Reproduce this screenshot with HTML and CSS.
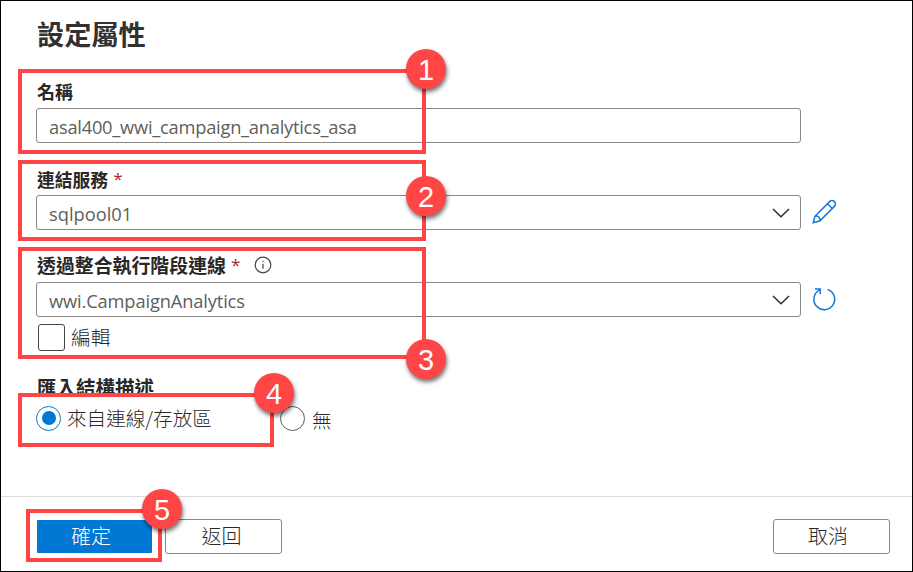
FILE: index.html
```html
<!DOCTYPE html>
<html lang="zh-Hant">
<head>
<meta charset="utf-8">
<title>設定屬性</title>
<link rel="stylesheet" href="styles.css">
</head>
<body>
<div class="panel">
  <main class="form">
    <h1 class="title">設定屬性</h1>

    <div class="field field-name">
      <label class="label label-name">名稱</label>
      <div class="row"><div class="input"><span class="t-name">asal400_wwi_campaign_analytics_asa</span></div></div>
    </div>

    <div class="field field-service">
      <label class="label label-service">連結服務<span class="req">*</span></label>
      <div class="row">
        <div class="input"><span class="t-pool">sqlpool01</span>
          <svg class="chevron" width="18" height="10" viewBox="0 0 18 10"><path d="M1 1l8 7.7L17 1"/></svg>
        </div>
        <svg class="action" width="26" height="26" viewBox="0 0 26 26"><path d="M2.2 23.7l1.7-6.4L18.6 2.6a3.35 3.35 0 0 1 4.8 4.8L8.7 22z M3.9 17.3a3.6 3.6 0 0 1 4.8 4.7 M16.5 4.7l4.8 4.8"/></svg>
      </div>
    </div>

    <div class="field field-runtime">
      <label class="label label-runtime">透過整合執行階段連線<span class="req">*</span>
        <svg class="info" width="18" height="18" viewBox="0 0 18 18"><circle cx="9" cy="9" r="7.8"/><path d="M9 7.7v5M9 4.8v1.3"/></svg>
      </label>
      <div class="row">
        <div class="input"><span class="t-wwi">wwi.CampaignAnalytics</span>
          <svg class="chevron" width="18" height="10" viewBox="0 0 18 10"><path d="M1 1l8 7.7L17 1"/></svg>
        </div>
        <svg class="action" width="26" height="26" viewBox="0 0 26 26"><path d="M16.5 3.4A10.4 10.4 0 1 1 8.4 4.1M4 3.1h5.2v5.2"/></svg>
      </div>
      <div class="check"><span class="checkbox"></span><span class="check-text">編輯</span></div>
    </div>

    <div class="field field-schema">
      <div class="label label-schema">匯入結構描述</div>
      <div class="radios">
        <span class="radio radio-on"></span><span class="radio-source">來自連線/存放區</span>
        <span class="radio"></span><span class="radio-none">無</span>
      </div>
    </div>
  </main>

  <footer class="footer">
    <button class="btn primary">確定</button>
    <button class="btn back">返回</button>
    <button class="btn cancel">取消</button>
  </footer>

  <div class="callout c1"><b class="badge">1</b></div>
  <div class="callout c2"><b class="badge">2</b></div>
  <div class="callout c3"><b class="badge low">3</b></div>
  <div class="callout c4"><b class="badge">4</b></div>
  <div class="callout c5"><b class="badge">5</b></div>
</div>
</body>
</html>
```
FILE: styles.css
```css
* { box-sizing: border-box; }
body { margin: 0; }
.panel {
  position: relative;
  display: flex;
  flex-direction: column;
  width: 913px;
  height: 572px;
  border: 1px solid #000;
  background: #fff;
  color: #292827;
  font-family: "Open Sans", "Noto Sans CJK TC", sans-serif;
  overflow: hidden;
}
.form { height: 495px; padding: 16px 0 0 36px; }
.title { margin: 0; height: 32px; font: 700 27.2px/32px "Noto Sans CJK TC", sans-serif; color: #323130; }
.field { margin-left: -1px; }
.field-name { margin-top: 31px; }
.field-service { margin-top: 24px; }
.field-runtime { margin-top: 24px; }
.field-schema { margin-top: 24px; }
.label {
  display: flex;
  align-items: center;
  height: 24px;
  margin-bottom: 4px;
  padding: 0 0 2px 1px;
  font-family: "Noto Sans CJK TC", sans-serif;
  font-weight: 700;
  font-size: 18px;
  white-space: nowrap;
}
.label-service { padding-bottom: 1px; font-size: 17.8px; }
.label-runtime { padding-bottom: 3px; font-size: 18.9px; }
.label-schema { font-size: 19.5px; }
.req { margin-left: 5px; font: 400 17px/20px "Open Sans", sans-serif; color: #a4262c; }
.info { margin-left: 14px; fill: none; stroke: #484644; stroke-width: 1.2; }
.row { display: flex; align-items: center; height: 35px; }
.input {
  display: flex;
  align-items: center;
  justify-content: space-between;
  width: 765px;
  height: 35px;
  padding: 1px 10px 0 12px;
  border: 1.4px solid #8a8886;
  border-radius: 3px;
  font-size: 18.3px;
  color: #605e5c;
}
.t-name { letter-spacing: -.24px; }
.t-wwi { letter-spacing: -.14px; }
.chevron { fill: none; stroke: #292827; stroke-width: 1.4; }
.action { margin: -2px 0 0 10px; fill: none; stroke: #1279d6; stroke-width: 1.5; }
.check { display: flex; align-items: center; gap: 6px; height: 27px; margin: 7px 0 0 2px; font-size: 19.7px; }
.check-text, .radio-source, .radio-none { font-family: "Noto Sans CJK TC", sans-serif; font-weight: 300; }
.check-text { padding-bottom: 2px; }
.checkbox { width: 27px; height: 27px; border: 1.4px solid #484644; border-radius: 3px; }
.radios { display: flex; align-items: center; height: 26px; margin-top: 6px; font-size: 19.6px; }
.radio { width: 25px; height: 25px; border: 1.4px solid #605e5c; border-radius: 50%; }
.radio-on { display: grid; place-items: center; border-color: #0078d4; }
.radio-on::after { content: ""; width: 14px; height: 14px; border-radius: 50%; background: #0078d4; }
.radio-source { width: 213px; margin-left: 6px; padding-bottom: 1px; }
.radio-none { margin: 2px 0 0 7px; }
.footer { display: flex; align-items: center; height: 75px; padding: 4px 22px 0 36px; border-top: 1px solid #dddcdb; }
.btn {
  width: 117px;
  height: 35px;
  padding: 0 7px 2px 0;
  border: 1.4px solid #8a8886;
  border-radius: 3px;
  background: #fff;
  color: #292827;
  font: 300 20px/31px "Noto Sans CJK TC", sans-serif;
}
.primary { width: 115px; height: 33px; border: 0; border-radius: 1px; background: #0078d4; color: #fff; }
.back { margin-left: 13px; padding-right: 4px; }
.cancel { margin-left: auto; }
.callout { position: absolute; left: 17px; width: 408px; border: 4px solid #ff4545; }
.c1 { top: 68px; height: 85px; }
.c2 { top: 159px; height: 81px; }
.c3 { top: 246px; height: 112px; }
.c4 { top: 392px; width: 256px; height: 54px; }
.c5 { left: 25px; top: 508px; width: 136px; height: 53px; }
.badge {
  position: absolute;
  right: -24px;
  top: -24px;
  width: 40px;
  height: 40px;
  border-radius: 50%;
  background: #ff4545;
  box-shadow: 1px 3px 4px rgba(0, 0, 0, .55);
  color: #fff;
  font: 400 29px/42px "Liberation Sans", sans-serif;
  text-align: center;
}
.c2 .badge { top: 12px; }
.low { top: auto; bottom: -24px; }
```
